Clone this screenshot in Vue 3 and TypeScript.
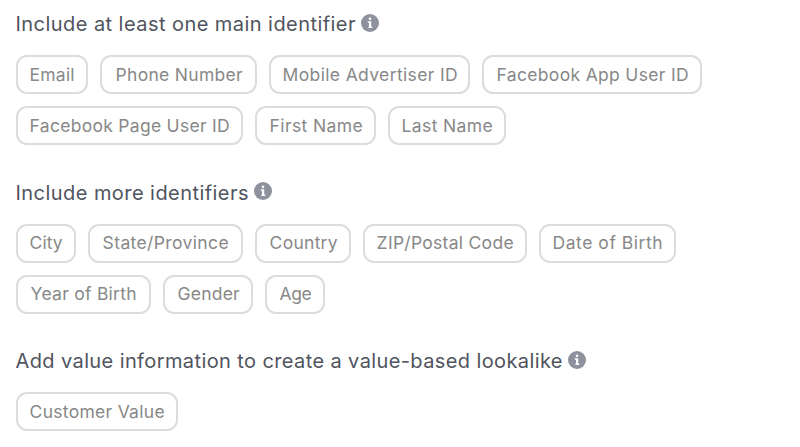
<script setup lang="ts">
interface Tag { label: string; width: number; text: number }
interface Section { title: string; width: number; rows: Tag[][] }
const t = (label: string, width: number, text: number): Tag => ({ label, width, text })
const sections: Section[] = [
  { title: 'Include at least one main identifier', width: 340, rows: [
    [t('Email', 72, 46), t('Phone Number', 157, 128), t('Mobile Advertiser ID', 201, 176), t('Facebook App User ID', 220, 193)],
    [t('Facebook Page User ID', 227, 201), t('First Name', 121, 94), t('Last Name', 118, 92)],
  ] },
  { title: 'Include more identifiers', width: 233, rows: [
    [t('City', 60, 34), t('State/Province', 155, 127), t('Country', 96, 69), t('ZIP/Postal Code', 164, 138), t('Date of Birth', 137, 111)],
    [t('Year of Birth', 135, 107), t('Gender', 90, 63), t('Age', 60, 33)],
  ] },
  { title: 'Add value information to create a value-based lookalike', width: 547, rows: [
    [t('Customer Value', 162, 136)],
  ] },
]
</script>

<template>
  <main class="page">
    <section v-for="s in sections" :key="s.title" class="group">
      <h2 class="title">
        <svg class="heading" :style="{ width: s.width + 'px' }" height="24"><text x="-0.5" y="19.2" :textLength="s.width">{{ s.title }}</text></svg>
        <svg class="info" viewBox="0 0 18 18"><circle cx="9" cy="9" r="9" /><circle class="mark" cx="9" cy="4.8" r="1.35" /><path d="M6.8 7.3h3.4v5.2h1V14H7.4v-1.5H8V8.8H6.8z" /></svg>
      </h2>
      <div v-for="(row, i) in s.rows" :key="i" class="row">
        <button v-for="tag in row" :key="tag.label" class="tag" :style="{ width: tag.width + 'px' }">
          <svg :style="{ width: tag.text + 'px' }" height="24"><text x="0.6" y="18" :textLength="tag.text - 1">{{ tag.label }}</text></svg>
        </button>
      </div>
    </section>
  </main>
</template>

<style>
body { margin: 0; background: #fff; }
</style>
<style scoped>
.page { padding: 12px 16px 0; font-family: Inter, sans-serif; }
.group { height: 168.5px; }
.group:last-child { height: auto; }
.title { display: flex; gap: 5.4px; margin: 0 0 19px; height: 24px; font-size: 20px; font-weight: 400; }
.heading { fill: #50545e; overflow: visible; }
.info { width: 18px; height: 18px; margin-top: 1.5px; }
.info circle { fill: #8d929d; }
.info path, .info .mark { fill: #fff; }
.row { display: flex; gap: 12px; margin-bottom: 12px; }
.group:last-child .row { margin-bottom: 0; }
.tag { box-sizing: border-box; display: flex; justify-content: center; align-items: center; height: 39px; padding: 0; border: 2px solid #dcdcdc; border-radius: 11px; background: #fff; font-family: inherit; font-size: 17.5px; font-weight: 400; }
.tag svg { fill: #888; overflow: visible; flex: none; }
</style>
